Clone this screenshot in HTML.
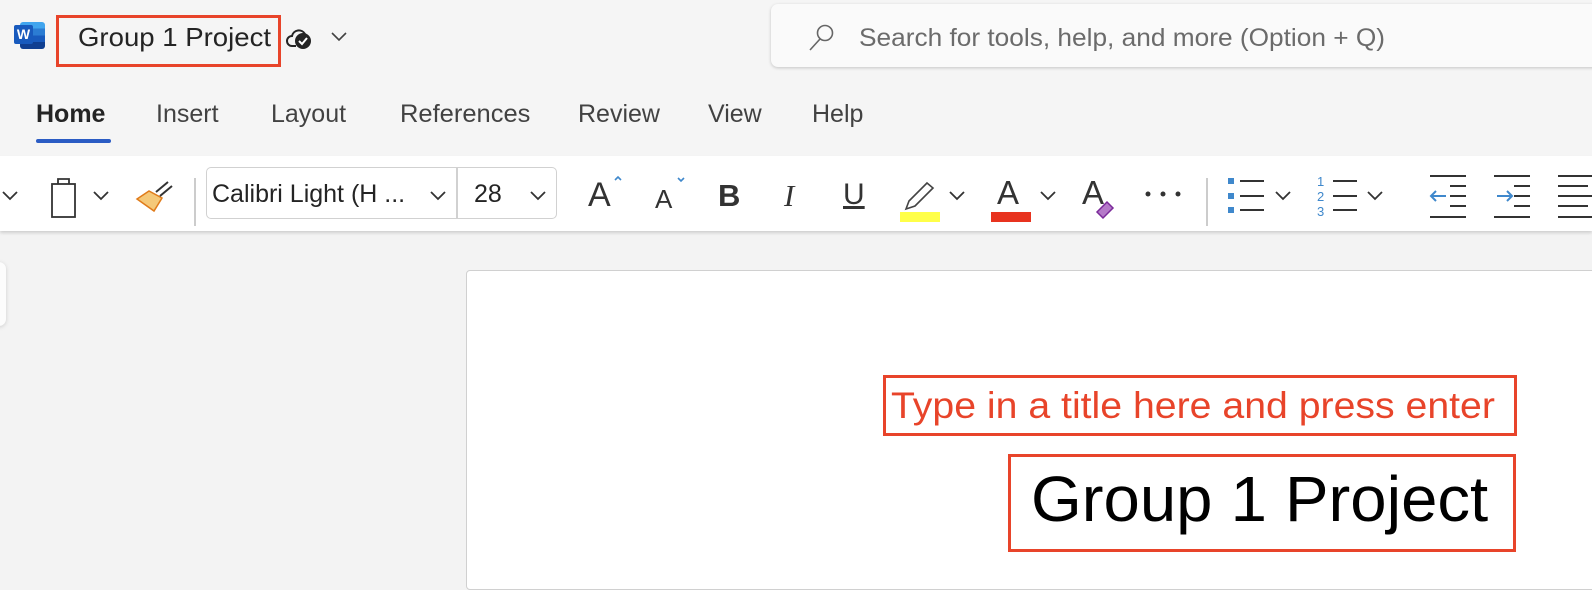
<!DOCTYPE html>
<html><head><meta charset="utf-8"><style>
*{margin:0;padding:0;box-sizing:border-box}
body{width:1592px;height:576px;overflow:hidden;background:#f3f3f3;font-family:"Liberation Sans",sans-serif;position:relative;color:#242424}
.a{position:absolute}
.tab{position:absolute;top:100px;font-size:25px;color:#424242;transform:scaleX(1.0);transform-origin:left}
svg{position:absolute;overflow:visible}
</style></head><body>
<div class="a" style="left:0;top:0;width:1592px;height:156px;background:#f5f5f5"></div>
<div class="a" style="left:20px;top:22px;width:25px;height:27px;background:linear-gradient(#41a5ee 0 25%,#2b7cd3 25% 50%,#185abd 50% 75%,#103f91 75%);border-radius:3px"></div>
<div class="a" style="left:14px;top:25px;width:19px;height:19px;background:#185abd;border-radius:2px;color:#fff;font-size:14px;font-weight:bold;text-align:center;line-height:19px">W</div>
<div class="a" style="left:56px;top:15px;width:225px;height:52px;border:3px solid #e8442a"></div>
<div class="a" style="left:78px;top:22px;font-size:26px;color:#242424;transform:scaleX(1.06);transform-origin:left">Group 1 Project</div>
<svg style="left:285px;top:26px" width="30" height="26"><path d="M11 20H7a5 5 0 0 1 0-10 7 7 0 0 1 13-2" fill="none" stroke="#242424" stroke-width="2"/><circle cx="18" cy="15" r="8" fill="#242424"/><path d="M14 15l3 3 5-6" stroke="#fff" stroke-width="2" fill="none"/></svg>
<svg style="left:331px;top:32px" width="16" height="10"><path d="M1 1l7 7 7-7" stroke="#424242" stroke-width="1.6" fill="none"/></svg>
<div class="a" style="left:771px;top:4px;width:840px;height:63px;background:#fafafa;border-radius:7px;box-shadow:0 1px 3px rgba(0,0,0,.2)"></div>
<svg style="left:806px;top:24px" width="30" height="26"><circle cx="19" cy="9" r="7.5" fill="none" stroke="#666" stroke-width="1.6"/><path d="M14 15L4 26" stroke="#666" stroke-width="1.6"/></svg>
<div class="a" style="left:859px;top:24px;font-size:25px;color:#6b6b6b;transform:scaleX(1.05);transform-origin:left">Search for tools, help, and more (Option + Q)</div>
<div class="tab" style="left:36px;color:#242424;font-weight:bold;transform:scaleX(1.0)">Home</div>
<div class="tab" style="left:156px">Insert</div>
<div class="tab" style="left:271px">Layout</div>
<div class="tab" style="left:400px;transform:scaleX(1.02)">References</div>
<div class="tab" style="left:578px">Review</div>
<div class="tab" style="left:708px">View</div>
<div class="tab" style="left:812px">Help</div>
<div class="a" style="left:36px;top:139px;width:75px;height:4px;background:#2b5cc4;border-radius:2px"></div>
<div class="a" style="left:0;top:156px;width:1592px;height:75px;background:#fff;box-shadow:0 2px 3px rgba(0,0,0,.15)"></div>
<svg style="left:0;top:156px" width="1592" height="75">
<g fill="none" stroke="#333" stroke-width="1.8">
<path d="M3 36l7 7 7-7"/>
<rect x="52" y="28" width="23" height="33"/><path d="M58 28v-5h11v5"/>
<path d="M94 36l7 7 7-7"/>
<path d="M1276 36l7 7 7-7M1368 36l7 7 7-7M950 36l7 7 7-7M1041 36l7 7 7-7M431 36l7 7 7-7M531 36l7 7 7-7"/>
</g>
<path d="M137 43l17 12 8-13-13-7z" fill="#f5c878" stroke="#e07b1a" stroke-width="1.5"/>
<path d="M156 36l12-10M160 40l12-10" stroke="#333" stroke-width="2"/>
<rect x="194" y="22" width="2" height="48" fill="#ccc"/>
<rect x="1206" y="22" width="2" height="48" fill="#ccc"/>
<path d="M906 53l3-8 18-18 6 5-18 18z" fill="none" stroke="#444" stroke-width="1.6"/>
<rect x="900" y="56" width="40" height="10" fill="#ffff48"/>
<rect x="991" y="56" width="40" height="10" fill="#e8331f"/>
<path d="M1103 62l-6-6 10-10 6 6z" fill="#b57ac9" stroke="#7b2a9a" stroke-width="1.5"/>
<circle cx="1148" cy="38" r="2.5" fill="#333"/><circle cx="1163" cy="38" r="2.5" fill="#333"/><circle cx="1178" cy="38" r="2.5" fill="#333"/>
<g fill="#3f88cc"><rect x="1228" y="22" width="6" height="6"/><rect x="1228" y="37" width="6" height="6"/><rect x="1228" y="51" width="6" height="6"/></g>
<g stroke="#333" stroke-width="2"><path d="M1240 25h24M1240 40h24M1240 54h24M1333 25h24M1333 40h24M1333 54h24"/>
<path d="M1430 20h36M1450 30h16M1450 40h16M1450 50h16M1430 61h36"/>
<path d="M1494 20h36M1514 30h16M1514 40h16M1514 50h16M1494 61h36"/>
<path d="M1558 20h36M1558 30h30M1558 40h36M1558 50h30M1558 61h36"/></g>
<g fill="#3f88cc" font-size="13" font-family="Liberation Sans"><text x="1317" y="30">1</text><text x="1317" y="45">2</text><text x="1317" y="60">3</text></g>
<path d="M1446 40h-15M1436 35l-5 5 5 5" stroke="#3f88cc" stroke-width="2" fill="none"/>
<path d="M1497 40h15M1507 35l5 5-5 5" stroke="#3f88cc" stroke-width="2" fill="none"/>
<path d="M615 24l3-3 3 3M678 22l3 3 3-3" stroke="#3f88cc" stroke-width="1.6" fill="none"/>
</svg>
<div class="a" style="left:206px;top:167px;width:351px;height:52px;border:1.5px solid #d1d1d1;border-radius:5px"></div>
<div class="a" style="left:456px;top:168px;width:1.5px;height:50px;background:#d1d1d1"></div>
<div class="a" style="left:212px;top:180px;font-size:25px;transform:scaleX(1.0);transform-origin:left">Calibri Light (H ...</div>
<div class="a" style="left:474px;top:180px;font-size:25px">28</div>
<div class="a" style="left:588px;top:176px;font-size:34px;color:#333">A</div>
<div class="a" style="left:655px;top:184px;font-size:26px;color:#333">A</div>
<div class="a" style="left:718px;top:178px;font-size:31px;font-weight:bold;color:#333">B</div>
<div class="a" style="left:784px;top:178px;font-size:31px;font-style:italic;font-family:'Liberation Serif',serif;color:#333">I</div>
<div class="a" style="left:843px;top:178px;font-size:30px;color:#333;text-decoration:underline">U</div>
<div class="a" style="left:997px;top:174px;font-size:33px;color:#333">A</div>
<div class="a" style="left:1082px;top:174px;font-size:33px;color:#333">A</div>
<div class="a" style="left:-8px;top:262px;width:14px;height:64px;background:#fcfcfc;border-radius:8px;box-shadow:0 1px 4px rgba(0,0,0,.15)"></div>
<div class="a" style="left:466px;top:270px;width:1140px;height:320px;background:#fff;border:1.5px solid #d0d0d0;border-radius:4px"></div>
<div class="a" style="left:883px;top:375px;width:634px;height:61px;border:3px solid #e8442a"></div>
<div class="a" style="left:891px;top:385px;font-size:37px;color:#e8442a;white-space:nowrap;transform:scaleX(1.06);transform-origin:left">Type in a title here and press enter</div>
<div class="a" style="left:1008px;top:454px;width:508px;height:98px;border:3px solid #e8442a"></div>
<div class="a" style="left:1031px;top:462px;font-size:64px;color:#000;white-space:nowrap;transform:scaleX(1.02);transform-origin:left">Group 1 Project</div>
</body></html>
